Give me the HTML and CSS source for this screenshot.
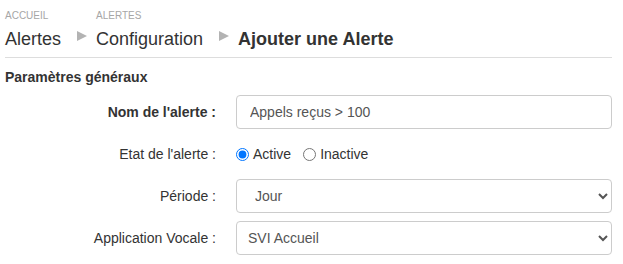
FILE: index.html
```html
<!DOCTYPE html>
<html lang="fr">
<head>
  <meta charset="UTF-8" />
  <meta name="viewport" content="width=device-width, initial-scale=1.0" />
  <title>Ajouter une Alerte</title>
  <link rel="stylesheet" href="styles.css">
</head>
<body>
  <header class="breadcrumb">
    <div class="crumb">
      <span class="crumb-label">ACCUEIL</span>
      <a href="#" class="crumb-link">Alertes</a>
    </div>
    <span class="crumb-sep"></span>
    <div class="crumb">
      <span class="crumb-label">ALERTES</span>
      <a href="#" class="crumb-link">Configuration</a>
    </div>
    <span class="crumb-sep"></span>
    <div class="crumb">
      <span class="crumb-label">&nbsp;</span>
      <span class="crumb-current">Ajouter une Alerte</span>
    </div>
  </header>

  <section class="settings">
    <h2>Paramètres généraux</h2>
    <form class="alert-form">
      <label class="field-label strong" for="alertName">Nom de l'alerte :</label>
      <input type="text" id="alertName" class="field" value="Appels reçus &gt; 100">

      <span class="field-label">Etat de l'alerte :</span>
      <div class="radio-group">
        <label><input type="radio" name="state" checked> Active</label>
        <label><input type="radio" name="state"> Inactive</label>
      </div>

      <label class="field-label" for="period">Période :</label>
      <select id="period" class="field period">
        <option>Jour</option>
        <option>Semaine</option>
        <option>Mois</option>
      </select>

      <label class="field-label" for="app">Application Vocale :</label>
      <select id="app" class="field">
        <option>SVI Accueil</option>
        <option>SVI Support</option>
      </select>
    </form>
  </section>
</body>
</html>
```

FILE: styles.css
```css
:root {
  --text-color: #333;
  --muted: #a6a6a6;
  --border-color: #ccc;
  --field-text: #555;
}

body {
  margin: 0;
  padding: 0 11px 0 5px;
  font-family: 'Liberation Sans', Arial, sans-serif;
  color: var(--text-color);
  background: #fff;
}

.breadcrumb {
  display: flex;
  align-items: flex-end;
  padding: 10px 0 7px;
  border-bottom: 1px solid #ddd;
}

.crumb {
  display: flex;
  flex-direction: column;
}

.crumb-label {
  font-size: 10px;
  color: var(--muted);
  line-height: 12px;
  margin-bottom: 6px;
}

.crumb-link,
.crumb-current {
  font-size: 18px;
  line-height: 22px;
  color: var(--text-color);
  text-decoration: none;
}

.crumb-current {
  font-weight: bold;
}

.crumb-sep {
  width: 0;
  height: 0;
  border-left: 10px solid #b3b3b3;
  border-top: 5px solid transparent;
  border-bottom: 5px solid transparent;
  margin: 0 9px 9px 16px;
}

.settings h2 {
  font-size: 14px;
  margin: 11px 0 10px;
  line-height: 16px;
}

.alert-form {
  display: grid;
  grid-template-columns: 211px 1fr;
  column-gap: 20px;
  row-gap: 8px;
  align-items: center;
}

.field-label {
  text-align: right;
  font-size: 14px;
}

.field-label.strong {
  font-weight: bold;
}

.field {
  height: 34px;
  box-sizing: border-box;
  border: 1px solid var(--border-color);
  border-radius: 4px;
  padding: 0 13px;
  font-family: inherit;
  font-size: 14px;
  color: var(--field-text);
  background: #fff;
}

select.field {
  padding-left: 7px;
}

select.field.period {
  padding-left: 14px;
}

.radio-group {
  height: 34px;
  display: flex;
  align-items: center;
  gap: 12px;
  font-size: 14px;
}

.radio-group label {
  display: flex;
  align-items: center;
  gap: 4px;
}

.radio-group input {
  margin: 0;
  width: 13px;
  height: 13px;
}
```
